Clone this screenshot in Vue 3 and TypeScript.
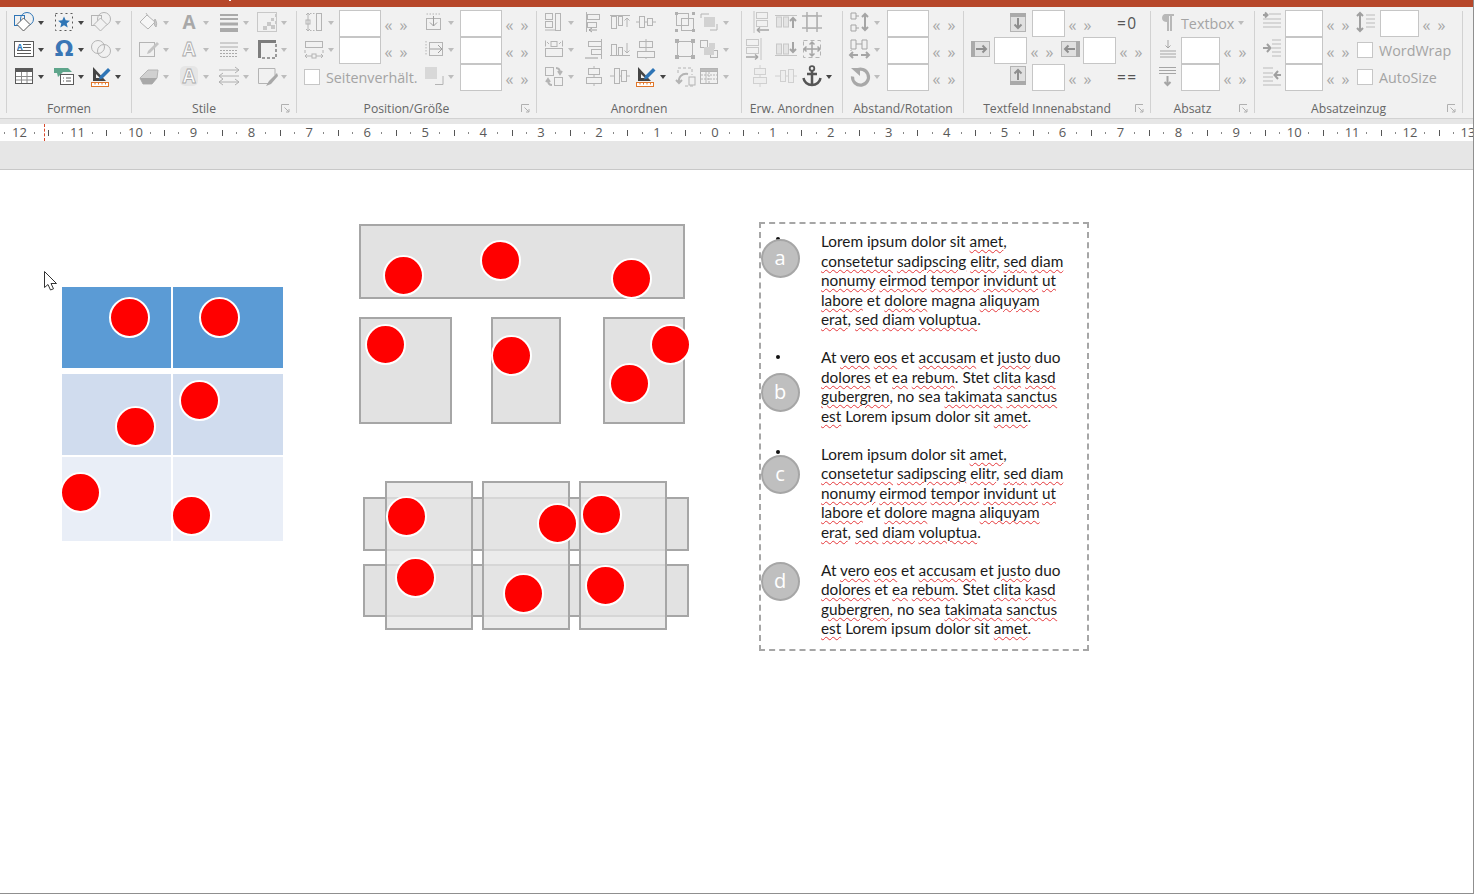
<script setup lang="ts">
type Cell = { k: string; w: number; n?: string; c?: number; t?: string }
type Group = { name: string; w: number; launcher?: boolean; rows: Cell[][] }

const D = '#5a5a5a'
const B = '#2e75b6'
const icons: Record<string, string> = {
  shape: `<rect x="2.5" y="5.5" width="10" height="10" stroke="${B}"/><circle cx="15" cy="9" r="6.5" stroke="${B}"/><path d="M11.5 8l6.5 6.5-6.5 6.5-6.5-6.5z" fill="#fff" stroke="${D}"/>`,
  star: `<rect x="3.5" y="3.5" width="17" height="17" stroke="${D}" stroke-dasharray="2 3"/><path d="M12 6.5l1.7 3.8 4.2.4-3.2 2.7 1 4-3.7-2.2-3.7 2.2 1-4-3.2-2.7 4.2-.4z" fill="${B}" stroke="none"/>`,
  shapeG: `<rect x="2.5" y="5.5" width="10" height="10"/><circle cx="15" cy="9" r="6.5"/><path d="M11.5 8l6.5 6.5-6.5 6.5-6.5-6.5z" fill="#f1f1f1"/>`,
  tbox: `<rect x="2.5" y="4.5" width="19" height="15" stroke="${D}" fill="#fff"/><text x="5" y="13" font-size="8" font-weight="700" fill="${B}" stroke="none" font-family="Open Sans">A</text><path stroke="${D}" d="M11 7.5h8M11 10.5h8M5 13.5h14M5 16.5h14"/>`,
  omega: `<text x="12" y="19" text-anchor="middle" font-size="22" font-weight="700" fill="#3a76b5" stroke="none" font-family="DejaVu Sans">Ω</text>`,
  venn: `<circle cx="9" cy="10" r="6.5"/><circle cx="15" cy="14" r="6.5"/>`,
  table: `<rect x="3.5" y="4.5" width="17" height="15" stroke="${D}" fill="#fff"/><rect x="3" y="4" width="18" height="4" fill="${D}" stroke="none"/><path stroke="#8a8a8a" d="M9.5 8v11M15 8v11M4 12.5h16M4 16h16"/>`,
  flow: `<path d="M2 4h14l4 4h-9l-5 5-1-4h-3z" fill="#5ea58b" stroke="none"/><rect x="8.5" y="10.5" width="13" height="10" fill="#fff" stroke="${D}"/><path stroke="${D}" d="M11 14h1M14 14h5M11 17h1M14 17h5"/>`,
  pen: `<path d="M4 3v14h13z" fill="#444" stroke="none"/><path d="M7 10v4h4z" fill="#f1f1f1" stroke="none"/><path d="M11 12l8-8 2.5 2.500-8 8-3.500 1z" fill="${B}" stroke="none"/><rect x="2.5" y="18.5" width="17" height="4" fill="#fff" stroke="#e0762a"/><path stroke="#e0762a" d="M6 19v1.5M9.500 19v1.500M13 19v1.500M16.500 19v1.500"/>`,
  bucket: `<path d="M3 12l7-7 8 7-7 7z" fill="#f6f6f6"/><path d="M9 3l2 3M18 9c2 3 2 6 1 8-2-1-2-5-1-8z" fill="#c8c8c8"/>`,
  aBig: `<text x="12" y="19" text-anchor="middle" font-size="19" font-weight="700" fill="#a8a8a8" stroke="none" font-family="Open Sans">A</text>`,
  lines: `<path stroke-width="2" stroke="#aaa" d="M3 5h18M3 9h18"/><path stroke-width="3" stroke="#aaa" d="M3 14h18"/><path stroke-width="4" stroke="#aaa" d="M3 20h18"/>`,
  checker: `<rect x="2.500" y="2.500" width="19" height="19" stroke="#c8c8c8"/><path stroke="none" fill="#c8c8c8" d="M20 4h2v3h-2zM16 8h3v3h-3zM20 11h2v3h-2zM12 12h4v4h-4zM16 15h4v4h-4zM8 16h4v4H8z"/>`,
  pencilSq: `<rect x="2.500" y="5.500" width="15" height="14"/><path d="M11 14l9-9 2 2-9 9-3 1z" fill="#c4c4c4" stroke="none"/>`,
  aOut: `<text x="12" y="19" text-anchor="middle" font-size="19" font-weight="700" fill="#f8f8f8" stroke="#aaa" stroke-width=".8" font-family="Open Sans">A</text>`,
  dashes: `<path stroke="#aaa" d="M3 6h18M3 10h18"/><path stroke="#aaa" stroke-dasharray="2 1" d="M3 13.500h18M3 16.500h18M3 19.500h18"/>`,
  thickSq: `<path d="M3 3h18v3H6v15H3z" fill="#7d7d7d" stroke="none"/><path stroke="#9a9a9a" stroke-width="2" stroke-dasharray="3 2" d="M21 7v14H7"/>`,
  eraser: `<path d="M3 14l8-8h10l-1 8-5 6H6z" fill="#d0d0d0"/><path d="M3 14l3 6 9 0 5-6" fill="#a8a8a8" stroke="none"/>`,
  aGlow: `<rect x="3" y="2" width="18" height="20" rx="5" fill="#e6e6e6" stroke="none"/><text x="12" y="19" text-anchor="middle" font-size="19" font-weight="700" fill="#fbfbfb" stroke="#aaa" stroke-width=".8" font-family="Open Sans">A</text>`,
  arrowsG: `<path stroke="#b0b0b0" d="M2 6h20M18 3l4 3-4 3M2 12h20M6 9l-4 3 4 3M2 18h20M6 15l-4 3 4 3M18 15l4 3-4 3"/>`,
  brushSq: `<path d="M14 19.500H3.500V4.500H20v7"/><path d="M22 9l-8 8-3 5 5-2 7-8z" fill="#a8a8a8" stroke="none"/>`,
  posH: `<path d="M6 3v18M4 5l2-2 2 2M4 19l2 2 2-2"/><rect x="4" y="10" width="4" height="4"/><rect x="14.500" y="3.500" width="5" height="17" fill="#f1f1f1"/><path stroke-dasharray="1.500 1.500" d="M8 3.500h6M8 20.500h6"/>`,
  posW: `<rect x="3.500" y="4.500" width="17" height="6"/><path d="M3 13v3M21 13v3M3 19h18M3 19l2-2M3 19l2 2M21 19l-2-2M21 19l-2 2"/><rect x="10" y="17" width="4" height="4" fill="#f1f1f1"/>`,
  arrDn: `<path stroke-dasharray="1.500 1.500" d="M4.500 4h14"/><rect x="4.500" y="8.500" width="14" height="11"/><path stroke="#9e9e9e" d="M11.500 6v10M8 12.500l3.500 3.500 3.500-3.500"/>`,
  arrRt: `<path stroke-dasharray="1.500 1.500" d="M4 4v15"/><rect x="7.500" y="5.500" width="13" height="13"/><path stroke="#9e9e9e" d="M8 12h12M16 8l4 4-4 4"/>`,
  sizeLink: `<rect x="3" y="3" width="12" height="12" fill="#d8d8d8" stroke="none"/><path d="M21 12v8.500h-8"/>`,
  alA: `<rect x="3.500" y="3.500" width="7" height="6"/><rect x="13.500" y="3.500" width="5" height="17"/><rect x="3.500" y="11.500" width="7" height="6"/><path d="M3 20h10"/>`,
  alB: `<rect x="3.500" y="11.500" width="17" height="8"/><path d="M3.500 3.500v6M20.500 3.500v6"/><rect x="9" y="4.500" width="6" height="5"/><path d="M7 7l-2-2M17 7l2-2"/>`,
  swap: `<rect x="3.500" y="3.500" width="8" height="8"/><rect x="12.500" y="13.500" width="8" height="8"/><path stroke-width="2" d="M14 4c3 0 4 2 4 5M16 7l2 3 2-3M10 21c-3 0-4-2-4-5M8 18l-2-3-2 3"/>`,
  left: `<path d="M4.500 2v20"/><rect x="5.500" y="4.500" width="12" height="5"/><rect x="5.500" y="12.500" width="9" height="5"/><path d="M7 20h8M7 20l3-2M7 20l3 2" stroke="#9e9e9e"/>`,
  right: `<path d="M19.500 2v20"/><rect x="6.500" y="4.500" width="13" height="5"/><rect x="9.500" y="12.500" width="10" height="5"/><path d="M3 21h13" stroke="#9e9e9e"/>`,
  top: `<path d="M2 5.500h20"/><rect x="3.500" y="6.500" width="5" height="12"/><rect x="10.500" y="6.500" width="4" height="9"/><path d="M19 17V8M16.500 10.500L19 8l2.500 2.500"/>`,
  bottom: `<path d="M2 18.500h20"/><rect x="3.500" y="7.500" width="5" height="11"/><rect x="10.500" y="10.500" width="4" height="8"/><path d="M19 6v10M16.500 13.500L19 16l2.500-2.500"/>`,
  midH: `<path d="M2 12h4M10 12h4M18 12h4"/><rect x="5.500" y="6.500" width="5" height="11"/><rect x="13.500" y="8.500" width="5" height="7"/>`,
  midV: `<path d="M12 2v20"/><rect x="5.500" y="4.500" width="13" height="6"/><rect x="3.500" y="14.500" width="17" height="6" fill="#f1f1f1"/>`,
  midV2: `<path d="M12 2v20"/><rect x="6.500" y="4.500" width="11" height="6" fill="#f1f1f1"/><rect x="4.500" y="13.500" width="15" height="6" fill="#f1f1f1"/>`,
  midH2: `<path d="M2 12h20"/><rect x="6.500" y="4.500" width="5" height="15" fill="#f1f1f1"/><rect x="13.500" y="6.500" width="5" height="11" fill="#f1f1f1"/>`,
  group: `<rect x="3.500" y="3.500" width="12" height="12"/><rect x="8.500" y="8.500" width="12" height="12"/><path fill="#b0b0b0" stroke="none" d="M2 2h3v3H2zM19 2h3v3h-3zM2 19h3v3H2zM19 19h3v3h-3z"/>`,
  front: `<path d="M4 8V4h8M20 14v6h-7" /><rect x="7" y="7" width="11" height="10" fill="#d2d2d2" stroke="none"/>`,
  ungroup: `<rect x="4.500" y="4.500" width="15" height="15"/><path fill="#b0b0b0" stroke="none" d="M2 2h4v4H2zM18 2h4v4h-4zM2 18h4v4H2zM18 18h4v4h-4z"/>`,
  back: `<rect x="3.500" y="3.500" width="7" height="7"/><rect x="13.500" y="13.500" width="7" height="7"/><rect x="7" y="10" width="10" height="8" fill="#d2d2d2" stroke="none"/><rect x="12" y="6" width="6" height="6" fill="#d2d2d2" stroke="none"/>`,
  rotG: `<path stroke-dasharray="3 2" d="M5 9V4h14v7M20 22H10"/><path stroke-width="2" d="M15 10c-6-1-10 3-9 9M3 16l3 3 3-3"/><rect x="16" y="13" width="6" height="8"/>`,
  tblG: `<rect x="3.500" y="4.500" width="17" height="15"/><rect x="3.500" y="4.500" width="17" height="3" fill="#bbb"/><path d="M4 11h16M4 15h16M12 8v11" stroke-dasharray="2 1"/><path stroke="#bbb" d="M9 8v11"/>`,
  e1: `<path stroke="#c4c4c4" d="M4 1v22"/><rect x="6.500" y="2.500" width="11" height="6" stroke="#c8c8c8"/><rect x="6.500" y="10.500" width="11" height="6" stroke="#c8c8c8"/><path stroke-width="1.500" stroke="#a5a5a5" d="M7 20h12M7 20l3-2.500M7 20l3 2.500"/>`,
  e2: `<path stroke="#c4c4c4" d="M1 5.500h22"/><rect x="2.500" y="7" width="5" height="10" fill="#e4e4e4" stroke="#c8c8c8"/><rect x="9.500" y="7" width="5" height="10" fill="#e4e4e4" stroke="#c8c8c8"/><path stroke-width="2" stroke="#a5a5a5" d="M19 18V8M16 11l3-3 3 3"/>`,
  e3: `<rect x="6.500" y="5.500" width="11" height="13" stroke="#c8c8c8"/><path stroke-width="1.500" d="M2 6h20M2 18h20M7 2v20M17 2v20" stroke="#b0b0b0"/>`,
  e4: `<path stroke="#c4c4c4" d="M20 1v22"/><rect x="5.500" y="2.500" width="12" height="6" stroke="#c8c8c8"/><rect x="5.500" y="10.500" width="12" height="6" stroke="#c8c8c8"/><path stroke-width="1.500" stroke="#a5a5a5" d="M5 20h12M17 20l-3-2.500M17 20l-3 2.500"/>`,
  e5: `<path stroke="#c4c4c4" d="M1 18.500h22"/><rect x="2.500" y="7" width="5" height="10" fill="#e4e4e4" stroke="#c8c8c8"/><rect x="9.500" y="7" width="5" height="10" fill="#e4e4e4" stroke="#c8c8c8"/><path stroke-width="2" stroke="#a5a5a5" d="M19 5v10M16 12l3 3 3-3"/>`,
  e6: `<path stroke-dasharray="4 3" d="M3.500 3.500h17v17h-17z"/><path stroke-width="1.500" stroke="#a5a5a5" d="M12 5v14M9.500 7.500L12 5l2.500 2.500M9.500 16.500L12 19l2.500-2.500M4 12h16M6.500 9.500L4 12l2.500 2.500M17.500 9.500L20 12l-2.500 2.500"/>`,
  e7: `<path stroke="#d0d0d0" d="M12 1v22"/><rect x="6.500" y="4.500" width="11" height="6" fill="#eee" stroke="#d0d0d0"/><rect x="5.500" y="13.500" width="13" height="6" fill="#eee" stroke="#d0d0d0"/>`,
  e8: `<path stroke="#d0d0d0" d="M1 12h22"/><rect x="6.500" y="6.500" width="5" height="11" fill="#eee" stroke="#d0d0d0"/><rect x="14.500" y="5.500" width="5" height="13" fill="#eee" stroke="#d0d0d0"/>`,
  anchor: `<circle cx="12" cy="4.500" r="2.300" stroke="#555" stroke-width="1.800"/><path stroke="#555" stroke-width="2.500" d="M12 7v13M7 10h10"/><path stroke="#555" stroke-width="2.500" d="M3.500 14c.5 4 4 7 8.500 7s8-3 8.500-7"/>`,
  spV: `<path stroke="#a5a5a5" d="M3 3h5M3 9h5M3 15h5M3 21h5M8 3v6M8 15v6M3 3v6M3 15v6M8 6h3M8 18h3"/><path stroke="#a5a5a5" stroke-width="2" d="M17 4v16M14 7l3-3 3 3M14 17l3 3 3-3"/>`,
  spH: `<path stroke="#a5a5a5" d="M3 3v9h5V3zM14 3v9h5V3zM8 7h6M3 14v-1"/><path stroke="#a5a5a5" stroke-width="2" d="M2 18h8M5 15l-3 3 3 3M13 18h8M18 15l3 3-3 3"/>`,
  rotate: `<path stroke="#a8a8a8" stroke-width="3.200" d="M8 6.500a8 8 0 1 1-3.500 6"/><path fill="#a8a8a8" stroke="none" d="M3 4h9v8z"/>`,
  tT: `<rect x="4.500" y="3.500" width="15" height="18" fill="#e0e0e0"/><rect x="4" y="3" width="16" height="4" fill="#aaa" stroke="none"/><path stroke="#8e8e8e" stroke-width="2" d="M12 8v10M8.500 14.500L12 18l3.500-3.500"/>`,
  tB: `<rect x="4.500" y="2.500" width="15" height="18" fill="#e0e0e0"/><rect x="4" y="17" width="16" height="4" fill="#aaa" stroke="none"/><path stroke="#8e8e8e" stroke-width="2" d="M12 16V6M8.500 9.500L12 6l3.500 3.500"/>`,
  tL: `<rect x="2.500" y="4.500" width="18" height="15" fill="#e0e0e0"/><rect x="2" y="4" width="4" height="16" fill="#aaa" stroke="none"/><path stroke="#8e8e8e" stroke-width="2" d="M7 12h10M13.500 8.500L17 12l-3.500 3.500"/>`,
  tR: `<rect x="3.500" y="4.500" width="18" height="15" fill="#e0e0e0"/><rect x="18" y="4" width="4" height="16" fill="#aaa" stroke="none"/><path stroke="#8e8e8e" stroke-width="2" d="M17 12H7M10.500 8.500L7 12l3.500 3.500"/>`,
  pilcrow: `<path fill="#b8b8b8" stroke="none" d="M9 4h9v2h-2v15h-2V6h-1v15h-2v-9c-3 0-5-1.500-5-4s2-4 3-4z"/>`,
  parUp: `<path stroke="#a5a5a5" d="M12 3v8M9.500 8.500L12 11l2.500-2.500M4 14h16M4 17h16M4 20h16"/>`,
  parDn: `<path stroke="#a5a5a5" d="M3 3.500h17M3 6.500h17M3 9.500h17"/><path stroke="#a5a5a5" stroke-width="2" d="M11.500 12v9M8.500 18l3 3 3-3"/>`,
  ind1: `<path stroke="#bbb" d="M9 4h12M3 9h18M3 13h18M3 17h18"/><path stroke="#a0a0a0" stroke-width="2" d="M3 5h4M5 2.500L7.500 5 5 7.500"/>`,
  ind2: `<path stroke="#bbb" d="M12 3h9M12 7h9M12 11h9M12 15h9M12 19h9"/><path stroke="#a0a0a0" stroke-width="2" d="M3 11h7M7 7l3.500 4L7 15"/>`,
  ind3: `<path stroke="#bbb" d="M3 4h10M3 9h10M3 13h10M3 17h10M3 21h18"/><path stroke="#a0a0a0" stroke-width="2" d="M21 11h-6M18 7l-3.500 4 3.500 4"/>`,
  lineSp: `<path stroke="#a0a0a0" stroke-width="2" d="M6 3v18M3 6l3-3 3 3M3 18l3 3 3-3"/><path stroke="#bbb" d="M12 5h9M12 9h9M12 13h9M12 17h9"/>`,
}

const i = (n: string, w: number, c = 0): Cell => ({ k: 'i', n, w, c })
const inp = (w: number): Cell => ({ k: 'in', w })
const ar = (w: number): Cell => ({ k: 'ar', w })
const gap = (w: number): Cell => ({ k: 'gap', w })
const ck = (t: string, w: number): Cell => ({ k: 'ck', t, w })

const groups: Group[] = [
  { name: 'Formen', w: 125, rows: [
    [i('shape', 40, 2), i('star', 37, 2), i('shapeG', 40, 1)],
    [i('tbox', 40, 2), i('omega', 37, 2), i('venn', 40, 1)],
    [i('table', 40, 2), i('flow', 37, 2), i('pen', 40, 2)],
  ] },
  { name: 'Stile', w: 165, launcher: true, rows: [
    [i('bucket', 40, 1), i('aBig', 40, 1), i('lines', 38, 1), i('checker', 40, 1)],
    [i('pencilSq', 40, 1), i('aOut', 40, 1), i('dashes', 38, 1), i('thickSq', 40, 1)],
    [i('eraser', 40, 1), i('aGlow', 40, 1), i('arrowsG', 38, 1), i('brushSq', 40, 1)],
  ] },
  { name: 'Position/Größe', w: 240, launcher: true, rows: [
    [i('posH', 42, 1), inp(42), ar(36), i('arrDn', 43, 1), inp(42), ar(34)],
    [i('posW', 42, 1), inp(42), ar(36), i('arrRt', 43, 1), inp(42), ar(34)],
    [gap(7), ck('Seitenverhält.', 113), i('sizeLink', 43, 1), inp(42), ar(34)],
  ] },
  { name: 'Anordnen', w: 205, rows: [
    [i('alA', 40, 1), i('left', 26), i('top', 26), i('midH', 39), i('group', 24), i('front', 49, 1)],
    [i('alB', 40, 1), i('right', 26), i('bottom', 26), i('midV', 39), i('ungroup', 24), i('back', 49, 1)],
    [i('swap', 40, 1), i('midV2', 26), i('midH2', 26), i('pen', 39, 2), i('rotG', 24), i('tblG', 49, 1)],
  ] },
  { name: 'Erw. Anordnen', w: 101, rows: [
    [gap(3), i('e1', 24), i('e2', 26), i('e3', 26)],
    [gap(-6), i('e4', 33), i('e5', 26), i('e6', 26)],
    [gap(1), i('e7', 26), i('e8', 26), i('anchor', 40, 2)],
  ] },
  { name: 'Abstand/Rotation', w: 121, rows: [
    [i('spV', 44, 1), inp(42), ar(34)],
    [i('spH', 44, 1), inp(42), ar(34)],
    [i('rotate', 44, 1), inp(42), ar(34)],
  ] },
  { name: 'Textfeld Innenabstand', w: 187, launcher: true, rows: [
    [gap(37), i('tT', 31), inp(33), ar(38), { k: 'eq', w: 40, t: '=0' }],
    [i('tL', 30), inp(33), ar(26), i('tR', 30), inp(33), ar(34)],
    [gap(37), i('tB', 31), inp(33), ar(38), { k: 'eq', w: 40, t: '==' }],
  ] },
  { name: 'Absatz', w: 104, launcher: true, rows: [
    [i('pilcrow', 30), { k: 'tx', w: 70, t: 'Textbox' }],
    [i('parUp', 30), inp(39), ar(34)],
    [i('parDn', 30), inp(39), ar(34)],
  ] },
  { name: 'Absatzeinzug', w: 208, launcher: true, rows: [
    [i('ind1', 30), inp(38), ar(26), i('lineSp', 31), inp(39), ar(34)],
    [i('ind2', 30), inp(38), ar(34), ck('WordWrap', 100)],
    [i('ind3', 30), inp(38), ar(34), ck('AutoSize', 100)],
  ] },
]

const rulerNums = ['12', '11', '10', '9', '8', '7', '6', '5', '4', '3', '2', '1', '0', '1', '2', '3', '4', '5', '6', '7', '8', '9', '10', '11', '12', '13']

const canvasRects = [
  { x: 359, y: 224, w: 326, h: 75 }, { x: 359, y: 317, w: 93, h: 107 },
  { x: 491, y: 317, w: 70, h: 107 }, { x: 603, y: 317, w: 82, h: 107 },
  { x: 363, y: 497, w: 326, h: 54 }, { x: 363, y: 564, w: 326, h: 53 },
]
const overlays = [385, 482, 579]
const cells = [
  { x: 62, y: 287, w: 109, h: 81, c: '#5b9bd5' }, { x: 173, y: 287, w: 110, h: 81, c: '#5b9bd5' },
  { x: 62, y: 374, w: 109, h: 81, c: '#d0dcee' }, { x: 173, y: 374, w: 110, h: 81, c: '#d0dcee' },
  { x: 62, y: 457, w: 109, h: 84, c: '#e9eef7' }, { x: 173, y: 457, w: 110, h: 84, c: '#e9eef7' },
]
const dots = [
  [129.5, 317.5], [219.5, 317.5], [135, 426], [199.5, 400], [80, 492], [191.5, 515],
  [403.5, 275], [500.5, 260], [631.5, 278], [385.5, 344], [511.5, 355], [629.5, 383], [670.5, 344],
  [406.5, 516], [415.5, 577], [557.5, 523], [523.5, 593], [601.5, 514], [605.5, 585],
]
const badges = [
  { t: 'a', y: 258, b: 239 }, { t: 'b', y: 392, b: 357 }, { t: 'c', y: 474, b: 452 }, { t: 'd', y: 581, b: 570 },
]

const parts = (s: string) =>
  s.split(/(\[[^\]]*\])/).filter(Boolean).map((p) =>
    p.startsWith('[') ? { t: p.slice(1, -1), e: true } : { t: p, e: false })

const P1 = ['Lorem ipsum dolor sit [amet],', '[consetetur] [sadipscing] [elitr], [sed] [diam]', '[nonumy] [eirmod] [tempor] [invidunt] [ut]', '[labore] et [dolore] magna [aliquyam]', '[erat], [sed] [diam] [voluptua].']
const P2 = ['At [vero] [eos] et [accusam] et [justo] duo', '[dolores] et [ea] [rebum]. Stet [clita] [kasd]', '[gubergren], no sea [takimata] [sanctus]', '[est] Lorem ipsum dolor sit [amet].']
const paras = [P1, P2, P1, P2].map((p) => p.map(parts))
</script>

<template>
  <div class="window">
    <div class="titlebar"><span class="tmark"></span></div>
    <div class="ribbon">
      <section v-for="g in groups" :key="g.name" class="group" :style="{ width: g.w + 'px' }">
        <div class="rows">
          <div v-for="(row, ri) in g.rows" :key="ri" class="row">
            <div v-for="(c, ci) in row" :key="ci" class="cell" :class="'c-' + c.k" :style="c.w < 0 ? { marginLeft: c.w + 'px', width: 0 } : { width: c.w + 'px' }">
              <template v-if="c.k === 'i'">
                <svg class="ico" viewBox="0 0 24 24" width="24" height="24" fill="none" stroke="#b4b4b4" v-html="icons[c.n!]"></svg>
                <span v-if="c.c" class="caret" :class="{ dark: c.c === 2 }"></span>
              </template>
              <template v-else-if="c.k === 'ar'"><span>«</span><span>»</span></template>
              <template v-else-if="c.k === 'ck'"><span class="box"></span><span class="lbl">{{ c.t }}</span></template>
              <template v-else-if="c.k === 'tx'"><span class="lbl">{{ c.t }}</span><span class="caret small"></span></template>
              <template v-else-if="c.k === 'eq'">{{ c.t }}</template>
            </div>
          </div>
        </div>
        <div class="glabel" :class="{ withl: g.launcher }">{{ g.name }}</div>
        <svg v-if="g.launcher" class="launch" viewBox="0 0 9 9" width="9" height="9" fill="none" stroke="#b0b0b0"><path d="M.5 8V.5H8"/><path d="M3.500 3.500L8 8M5 8h3V5"/></svg>
      </section>
    </div>
    <div class="gapbar"></div>
    <div class="ruler">
      <div v-for="(n, idx) in rulerNums" :key="idx" class="rcell">
        <i class="tick"></i><i class="dot"></i><b class="num">{{ n }}</b><i class="dot"></i>
      </div>
      <span class="marker"></span>
    </div>
    <div class="greyband"></div>
    <main class="canvas">
      <div v-for="(c, idx) in cells" :key="'c' + idx" class="shape" :style="{ left: c.x + 'px', top: c.y - 170 + 'px', width: c.w + 'px', height: c.h + 'px', background: c.c }"></div>
      <div v-for="(r, idx) in canvasRects" :key="'r' + idx" class="shape grey" :style="{ left: r.x + 'px', top: r.y - 170 + 'px', width: r.w + 'px', height: r.h + 'px' }"></div>
      <div v-for="x in overlays" :key="x" class="shape veil" :style="{ left: x + 'px' }"></div>
      <div v-for="(d, idx) in dots" :key="'d' + idx" class="dotshape" :style="{ left: d[0] - 20.5 + 'px', top: d[1] - 170 - 20.5 + 'px' }"></div>

      <div class="textbox">
        <p v-for="(p, pi) in paras" :key="pi" class="para">
          <span v-for="(line, li) in p" :key="li" class="line"><template v-for="(s, si) in line" :key="si"><span v-if="s.e" class="sq">{{ s.t }}</span><template v-else>{{ s.t }}</template></template></span>
        </p>
      </div>
      <template v-for="b in badges" :key="b.t">
        <span class="bullet" :style="{ top: b.b - 170 - 2 + 'px' }"></span>
        <div class="badge" :style="{ top: b.y - 170 - 19.5 + 'px' }">{{ b.t }}</div>
      </template>

      <svg class="cursor" width="14" height="20" viewBox="0 0 14 20"><path d="M.5.5v16l3.500-3 2.500 5.500 3-1.200-2.500-5.300h5.500z" fill="#fff" stroke="#333"/></svg>
    </main>
  </div>
</template>

<style scoped>
.window {
  width: 1474px;
  height: 894px;
  box-sizing: border-box;
  border-right: 1px solid #8f8f8f;
  border-bottom: 1px solid #8f8f8f;
  display: flex;
  flex-direction: column;
  overflow: hidden;
  background: #fff;
  font-family: "Open Sans", "Noto Sans", sans-serif;
}
.titlebar { height: 7px; background: #b7472a; position: relative; flex: none; }
.tmark { position: absolute; left: 229px; top: 0; width: 2px; height: 1px; background: #fff; }
.ribbon {
  height: 111px;
  flex: none;
  box-sizing: border-box;
  background: #f1f1f1;
  padding-left: 7px;
  display: flex;
  position: relative;
}
.ribbon::before {
  content: "";
  position: absolute;
  left: 6px;
  top: 4px;
  bottom: 5px;
  width: 1px;
  background: #d2d2d2;
}
.group { position: relative; padding-top: 3px; box-sizing: border-box; flex: none; }
.group::after {
  content: "";
  position: absolute;
  right: 0;
  top: 4px;
  bottom: 5px;
  width: 1px;
  background: #d2d2d2;
}
.rows { display: flex; flex-direction: column; height: 81px; }
.row { display: flex; height: 27px; flex: none; }
.cell { flex: none; display: flex; align-items: center; box-sizing: border-box; height: 27px; }
.c-i { padding-left: 5px; padding-bottom: 3px; }
.ico { flex: none; display: block; overflow: visible; }
.caret {
  flex: none;
  width: 0;
  height: 0;
  margin-left: 2px;
  margin-top: 1px;
  border-left: 3.500px solid transparent;
  border-right: 3.500px solid transparent;
  border-top: 4px solid #bdbdbd;
}
.caret.dark { border-top-color: #444; }
.caret.small { margin-left: 4px; margin-top: 0; }
.c-in { background: #fff; border: 1px solid #c6c6c6; }
.c-ar { color: #a8a8a8; font-size: 16px; padding-top: 3px; }
.c-ar span { width: 15px; flex: none; text-align: center; }
.c-ck { padding-bottom: 1px; }
.box { width: 16px; height: 16px; flex: none; box-sizing: border-box; background: #fff; border: 1px solid #c6c6c6; }
.lbl { color: #a4a4a4; font-size: 14.300px; margin-left: 6px; white-space: nowrap; }
.c-tx .lbl { margin-left: 0; }
.c-tx { padding-bottom: 1px; }
.c-eq { color: #555; font-size: 15.500px; letter-spacing: 1.500px; padding-left: 14px; padding-bottom: 2px; white-space: nowrap; }
.glabel {
  margin-top: 10px;
  height: 16px;
  line-height: 16px;
  font-size: 12.200px;
  color: #666;
  text-align: center;
  padding-right: 1px;
  white-space: nowrap;
}
.glabel.withl { padding-right: 21px; }
.launch { position: absolute; right: 7px; top: 97px; }
.gapbar { height: 6px; flex: none; background: #e6e6e6; border-top: 1px solid #d2d2d2; box-sizing: border-box; }
.ruler { height: 17px; flex: none; background: #fff; display: flex; position: relative; margin-left: -16.600px; }
.rcell { flex: none; width: 57.950px; display: grid; grid-template-columns: repeat(4, 1fr); align-items: center; justify-items: center; }
.tick { width: 1px; height: 6px; background: #555; }
.dot { width: 1px; height: 2px; background: #888; }
.num { font-weight: 400; font-size: 13px; color: #595959; line-height: 17px; white-space: nowrap; }
.marker { position: absolute; left: 60.600px; top: 0; bottom: 0; border-left: 1px dashed #d9482b; }
.greyband { height: 29px; flex: none; background: #e6e6e6; border-bottom: 1px solid #c8c8c8; box-sizing: border-box; }
.canvas { flex: 1; position: relative; background: #fff; }
.shape { position: absolute; box-sizing: border-box; }
.grey { background: #e2e2e2; border: 2px solid #a6a6a6; }
.veil { top: 311px; width: 88px; height: 149px; background: rgba(229, 229, 229, 0.76); border: 2px solid #a6a6a6; }
.dotshape { position: absolute; width: 41px; height: 41px; box-sizing: border-box; border-radius: 50%; background: #ff0000; border: 2px solid #fff; }
.textbox {
  position: absolute;
  left: 759px;
  top: 52px;
  width: 330px;
  height: 429px;
  box-sizing: border-box;
  border: 2px dashed #a6a6a6;
  padding: 8px 0 0 60px;
  font-family: Lato, "Open Sans", sans-serif;
  font-size: 15.350px;
  line-height: 19.600px;
  color: #1a1a1a;
}
.para { margin: 0 0 18.100px; }
.line { display: block; white-space: nowrap; }
.sq { text-decoration: underline wavy #e5383b; text-decoration-thickness: 1px; text-underline-offset: 2px; }
.bullet { position: absolute; left: 775.500px; width: 4px; height: 4px; border-radius: 50%; background: #111; }
.badge {
  position: absolute;
  left: 760.500px;
  width: 39px;
  height: 39px;
  box-sizing: border-box;
  border-radius: 50%;
  background: #bfbfbf;
  border: 2px solid #a6a6a6;
  color: #fff;
  font-size: 20px;
  line-height: 33px;
  text-align: center;
}
.cursor { position: absolute; left: 44px; top: 101px; }
</style>
